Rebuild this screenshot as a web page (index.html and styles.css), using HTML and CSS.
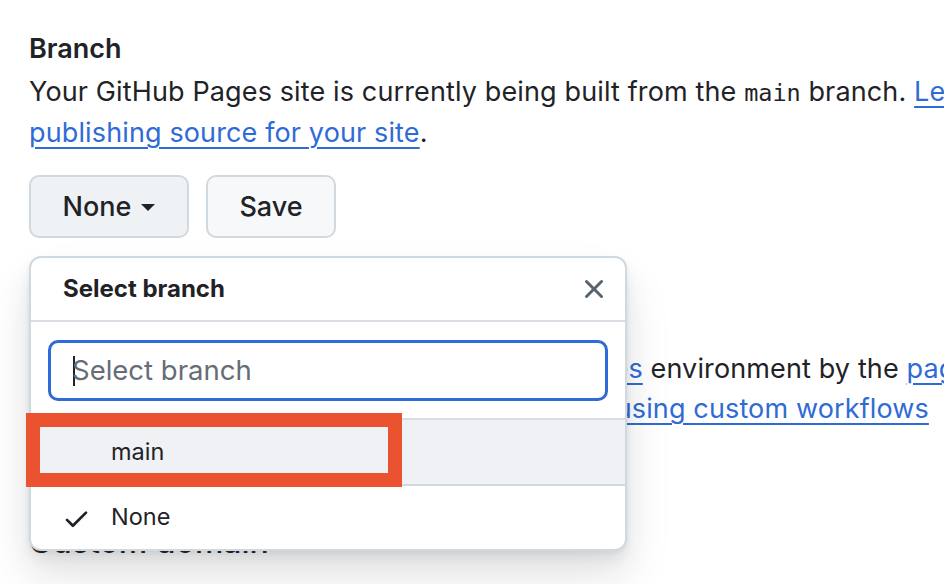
FILE: index.html
```html
<!DOCTYPE html>
<html lang="en">
<head>
<meta charset="utf-8">
<title>Pages – Branch</title>
<link rel="stylesheet" href="styles.css">
</head>
<body>
<main class="page">
  <section class="branch">
    <h3 class="title">Branch</h3>
    <p class="desc">Your GitHub Pages site is currently being built from the <code>main</code> branch. <a href="#">Learn how to configure the</a><br><a href="#">publishing source for your site</a>.</p>
    <div class="actions">
      <button class="btn btn-select" type="button">None <span class="caret"></span></button>
      <button class="btn btn-save" type="button">Save</button>
      <div class="popover">
        <div class="pop-header">
          <span class="pop-title">Select branch</span>
          <span class="pop-close">
            <svg viewBox="0 0 16 16" width="32" height="32"><path d="M3.72 3.72a.75.75 0 0 1 1.060 0L8 6.94l3.22-3.22a.749.749 0 0 1 1.275.326.749.749 0 0 1-.215.734L9.06 8l3.22 3.22a.749.749 0 0 1-.326 1.275.749.749 0 0 1-.734-.215L8 9.06l-3.22 3.22a.751.751 0 0 1-1.042-.018.751.751 0 0 1-.018-1.042L6.94 8 3.72 4.78a.75.75 0 0 1 0-1.06Z"/></svg>
          </span>
        </div>
        <div class="pop-filter">
          <div class="filter-input"><span class="text-caret"></span><span class="placeholder">Select branch</span></div>
        </div>
        <ul class="pop-list">
          <li class="item item-active">main</li>
          <li class="item">
            <svg class="check" viewBox="0 0 16 16" width="29" height="29"><path d="M13.78 4.22a.75.75 0 0 1 0 1.06l-7.25 7.25a.75.75 0 0 1-1.06 0L2.22 9.28a.751.751 0 0 1 .018-1.042.751.751 0 0 1 1.042-.018L6 10.94l6.72-6.72a.75.75 0 0 1 1.06 0Z"/></svg>
            None
          </li>
        </ul>
      </div>
    </div>
    <p class="desc deploy">Your site was last deployed to the <a href="#">github-pages</a> environment by the <a href="#">pages build and deployment</a> workflow.<br><a href="#">Learn more about deploying to GitHub Pages using custom workflows</a></p>
  </section>
  <h2 class="section-title">Custom domain</h2>
</main>
<div class="annotation"></div>
</body>
</html>
```
FILE: styles.css
```css
html, body {
  margin: 0;
  padding: 0;
  overflow: hidden;
  background: #ffffff;
}

body {
  position: relative;
  width: 944px;
  height: 584px;
  font-family: Inter, "Noto Sans", sans-serif;
  color: #1f2328;
}

.page {
  padding: 30px 0 0 29px;
  white-space: nowrap;
}

.title {
  margin: 0;
  font-size: 27px;
  line-height: 38px;
  font-weight: 600;
}

.desc {
  margin: 4px 0 0;
  font-size: 27px;
  line-height: 40px;
  letter-spacing: 0.13px;
}

a {
  color: #2f6bd6;
  text-decoration: underline;
  text-decoration-thickness: 2px;
  text-underline-offset: 5px;
}

code {
  font-family: "DejaVu Sans Mono", monospace;
  font-size: 23.5px;
  letter-spacing: 0;
}

.actions {
  position: relative;
  display: flex;
  gap: 17px;
  margin-top: 22px;
}

.btn {
  box-sizing: border-box;
  height: 63px;
  border: 2px solid #d1d9e0;
  border-radius: 10px;
  background: #f6f8fa;
  font-family: Inter, "Noto Sans", sans-serif;
  font-size: 27px;
  font-weight: 500;
  color: #1f2328;
  padding: 0;
}

.btn-select {
  width: 160px;
  background: #eff2f5;
  display: flex;
  align-items: center;
  justify-content: center;
  gap: 10px;
}

.btn-save {
  width: 130px;
}

.caret {
  width: 0;
  height: 0;
  border-left: 7px solid transparent;
  border-right: 7px solid transparent;
  border-top: 7px solid #1f2328;
  margin-top: 2px;
}

.popover {
  position: absolute;
  top: calc(100% + 18px);
  left: 0;
  z-index: 2;
  box-sizing: border-box;
  width: 598px;
  height: 295px;
  background: #ffffff;
  border: 2px solid #d1d9e0;
  border-radius: 12px;
  overflow: hidden;
  box-shadow: 0 2px 4px rgba(31, 35, 40, 0.05),
              0 8px 12px rgba(31, 35, 40, 0.05),
              0 16px 28px rgba(31, 35, 40, 0.06),
              0 28px 50px rgba(31, 35, 40, 0.09);
}

.pop-header {
  display: flex;
  align-items: center;
  justify-content: space-between;
  height: 62px;
  padding: 0 15px 0 32px;
  border-bottom: 2px solid #d8dee4;
}

.pop-title {
  font-size: 24px;
  font-weight: 700;
  line-height: 62px;
}

.pop-close {
  display: flex;
  width: 32px;
  height: 32px;
  fill: #59636e;
}

.pop-filter {
  padding: 18px 17px 17px;
}

.filter-input {
  box-sizing: border-box;
  height: 61px;
  border: 3px solid #2f6bd6;
  border-radius: 10px;
  padding-left: 22px;
  display: flex;
  align-items: center;
  font-size: 27.5px;
  line-height: 55px;
}

.text-caret {
  width: 2px;
  height: 30px;
  background: #1f2328;
  margin-right: -3px;
}

.placeholder {
  color: #656d76;
}

.pop-list {
  list-style: none;
  margin: 0;
  padding: 0;
  border-top: 2px solid #d8dee4;
}

.item {
  position: relative;
  height: 62px;
  line-height: 62px;
  padding-left: 80px;
  font-size: 23.5px;
  display: flex;
  align-items: center;
}

.item-active {
  height: 64px;
  background: #eff1f4;
  border-bottom: 2px solid #d1d9e0;
}

.check {
  position: absolute;
  left: 31px;
  top: 18px;
  fill: #1f2328;
}

.deploy {
  margin-top: 111px;
}

.section-title {
  margin: 93px 0 0;
  font-size: 32px;
  line-height: 40px;
  font-weight: 500;
}

.annotation {
  position: absolute;
  left: 26px;
  top: 413px;
  width: 376px;
  height: 74px;
  box-sizing: border-box;
  border: 14px solid #ea5230;
  z-index: 5;
}
```
